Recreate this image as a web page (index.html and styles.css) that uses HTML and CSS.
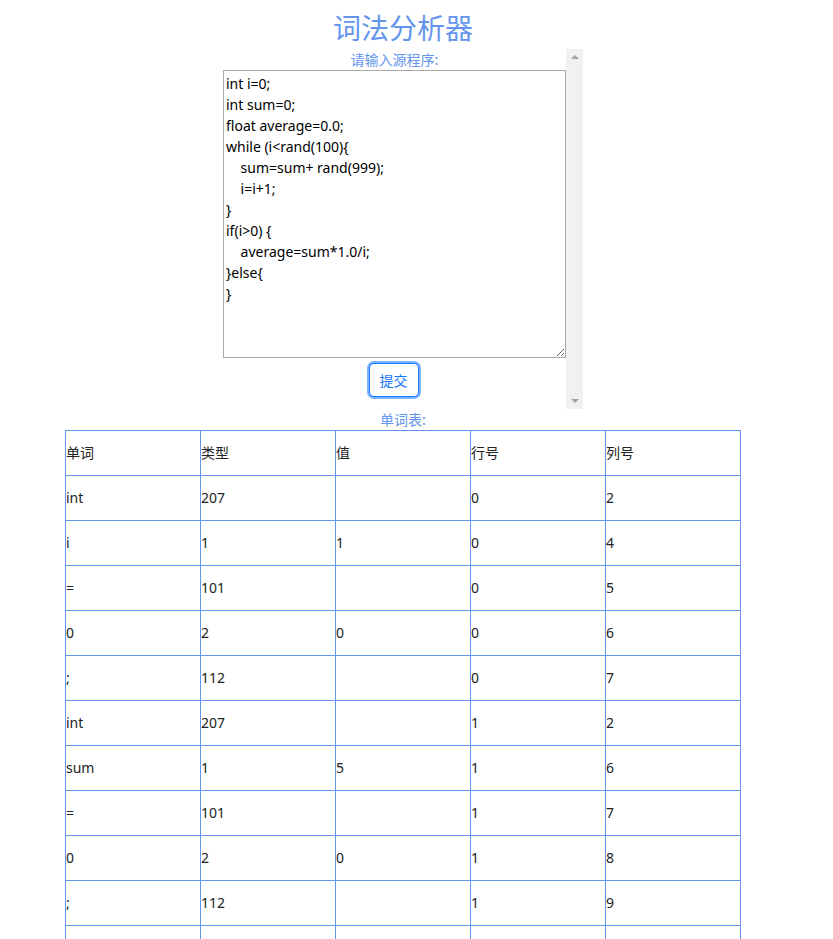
FILE: index.html
```html
<!DOCTYPE html>
<html lang="zh-CN">
<head>
<meta charset="utf-8">
<title>词法分析器</title>
<link rel="stylesheet" href="styles.css">
</head>
<body>
<div class="page">
  <div class="title">词法分析器</div>
  <div class="scrollbox">
    <div class="scroll-content">
      <div class="label">请输入源程序:</div>
      <textarea class="source">int i=0;
int sum=0;
float average=0.0;
while (i&lt;rand(100){
    sum=sum+ rand(999);
    i=i+1;
}
if(i&gt;0) {
    average=sum*1.0/i;
}else{
}</textarea>
      <button class="submit">提交</button>
    </div>
    <div class="scrollbar">
      <span class="arrow up"></span>
      <span class="arrow down"></span>
    </div>
  </div>
  <div class="label">单词表:</div>
  <table class="tokens">
    <tr><td>单词</td><td>类型</td><td>值</td><td>行号</td><td>列号</td></tr>
    <tr><td>int</td><td>207</td><td></td><td>0</td><td>2</td></tr>
    <tr><td>i</td><td>1</td><td>1</td><td>0</td><td>4</td></tr>
    <tr><td>=</td><td>101</td><td></td><td>0</td><td>5</td></tr>
    <tr><td>0</td><td>2</td><td>0</td><td>0</td><td>6</td></tr>
    <tr><td>;</td><td>112</td><td></td><td>0</td><td>7</td></tr>
    <tr><td>int</td><td>207</td><td></td><td>1</td><td>2</td></tr>
    <tr><td>sum</td><td>1</td><td>5</td><td>1</td><td>6</td></tr>
    <tr><td>=</td><td>101</td><td></td><td>1</td><td>7</td></tr>
    <tr><td>0</td><td>2</td><td>0</td><td>1</td><td>8</td></tr>
    <tr><td>;</td><td>112</td><td></td><td>1</td><td>9</td></tr>
    <tr><td>float</td><td>208</td><td></td><td>2</td><td>4</td></tr>
  </table>
</div>
</body>
</html>
```
FILE: styles.css
```css
html, body {
  margin: 0;
  padding: 0;
  background: #fff;
}
body {
  font-family: "Noto Sans", "Noto Sans CJK SC", sans-serif;
  font-size: 14px;
  color: #222;
}
.page {
  width: 806px;
}
.title {
  height: 49px;
  box-sizing: border-box;
  padding-top: 7px;
  line-height: 40px;
  font-size: 28px;
  text-align: center;
  color: #6495ed;
  font-family: "Noto Sans CJK SC", sans-serif;
}
.label {
  height: 21px;
  line-height: 21px;
  text-align: center;
  color: #6495ed;
  font-family: "Noto Sans CJK SC", sans-serif;
  font-size: 14px;
}
.scrollbox {
  display: flex;
  width: 360px;
  height: 360px;
  margin: 0 auto;
}
.scroll-content {
  flex: 1;
  display: flex;
  flex-direction: column;
  align-items: center;
  min-width: 0;
}
.source {
  box-sizing: border-box;
  width: 343px;
  height: 288px;
  margin: 0;
  padding: 2px;
  border: 1px solid #a9a9a9;
  font-family: "Noto Sans", "Noto Sans CJK SC", sans-serif;
  font-size: 14px;
  line-height: 21px;
  color: #000;
  resize: both;
  outline: none;
}
.submit {
  margin-top: 5px;
  margin-right: 2px;
  box-sizing: border-box;
  height: 34px;
  width: 50px;
  padding: 0;
  background: #fff;
  color: #1677ff;
  border: 1px solid #1677ff;
  border-radius: 5px;
  box-shadow: 0 0 0 2px #7db3ff;
  font-family: "Noto Sans CJK SC", sans-serif;
  font-size: 14px;
}
.scrollbar {
  width: 17px;
  background: #f1f1f1;
  display: flex;
  flex-direction: column;
  justify-content: space-between;
  align-items: center;
  padding: 6px 0;
  box-sizing: border-box;
}
.arrow {
  width: 0;
  height: 0;
  border-left: 4px solid transparent;
  border-right: 4px solid transparent;
}
.arrow.up {
  border-bottom: 4px solid #a3a3a3;
}
.arrow.down {
  border-top: 4px solid #a3a3a3;
}
.tokens {
  width: 676px;
  margin: 0 auto;
  border-collapse: collapse;
  table-layout: fixed;
}
.tokens td {
  border: 1px solid #6495ed;
  height: 42px;
  padding: 0 0 2px 0;
  vertical-align: middle;
  text-align: left;
  font-family: "Noto Sans", "Noto Sans CJK SC", sans-serif;
  font-size: 14px;
  color: #222;
}
```
